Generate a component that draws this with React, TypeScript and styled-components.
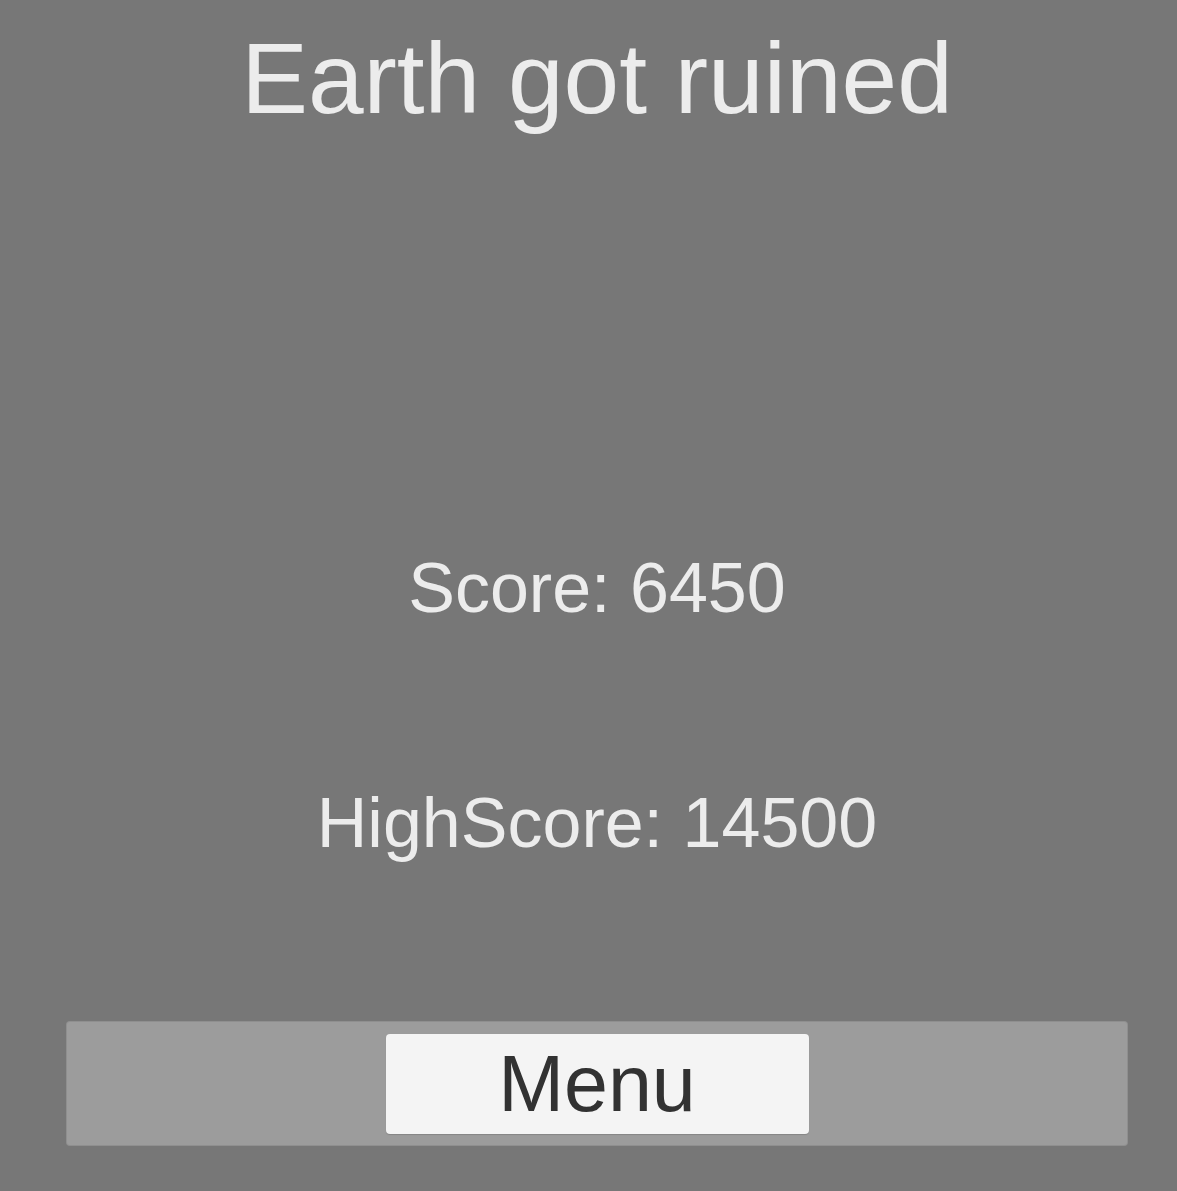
import styled, { createGlobalStyle } from "styled-components";

const GlobalStyle = createGlobalStyle`
  html, body {
    margin: 0;
    padding: 0;
    background: #777777;
  }
  body {
    font-family: "Liberation Sans", Arial, sans-serif;
  }
`;

const Screen = styled.div`
  box-sizing: border-box;
  height: 1191px;
  padding: 28px 49px 0 66px;
  display: flex;
  flex-direction: column;
  align-items: center;
  background: #777777;
  overflow: hidden;
`;

const Title = styled.h1`
  margin: 0;
  font-size: 100px;
  line-height: 100px;
  font-weight: 400;
  color: #ececec;
  white-space: nowrap;
`;

const Stat = styled.p<{ gap: number }>`
  margin: ${(p) => p.gap}px 0 0;
  font-size: 70px;
  line-height: 72px;
  color: #ececec;
  white-space: nowrap;
`;

const ButtonBar = styled.div`
  box-sizing: border-box;
  margin-top: 162px;
  align-self: stretch;
  height: 125px;
  background: #9c9c9c;
  border-radius: 4px;
  box-shadow: inset 0 0 0 1px rgba(0, 0, 0, 0.08);
  display: flex;
  justify-content: center;
  align-items: center;
`;

const MenuButton = styled.button`
  width: 423px;
  height: 100px;
  padding: 0;
  border: none;
  border-radius: 4px;
  background: #f4f4f4;
  box-shadow: 0 1px 1px rgba(0, 0, 0, 0.15);
  color: #323232;
  font-family: "Liberation Sans", Arial, sans-serif;
  font-size: 79px;
  line-height: 100px;
  cursor: pointer;
`;

export default function App() {
  return (
    <>
      <GlobalStyle />
      <Screen>
        <Title>Earth got ruined</Title>
        <Stat gap={424}>Score: 6450</Stat>
        <Stat gap={163}>HighScore: 14500</Stat>
        <ButtonBar>
          <MenuButton>Menu</MenuButton>
        </ButtonBar>
      </Screen>
    </>
  );
}
